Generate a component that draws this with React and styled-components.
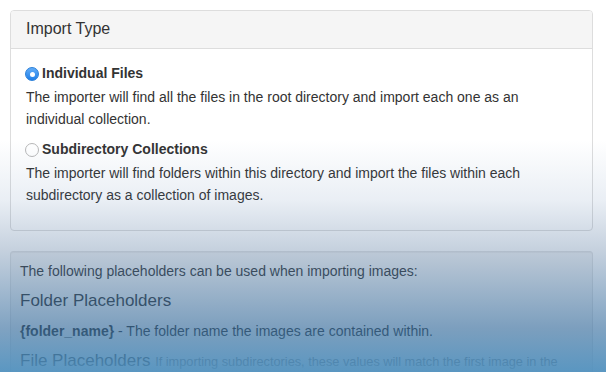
import React from 'react'
import styled, { createGlobalStyle } from 'styled-components'

const GlobalStyle = createGlobalStyle`
  html, body {
    margin: 0;
    padding: 0;
    background: #fff;
    overflow: hidden;
  }
  body {
    font-family: "Liberation Sans", Arial, sans-serif;
    font-size: 14px;
    line-height: 1.42857;
    color: #333;
  }
`

const options = [
  {
    title: 'Individual Files',
    checked: true,
    text: 'The importer will find all the files in the root directory and import each one as an individual collection.'
  },
  {
    title: 'Subdirectory Collections',
    checked: false,
    text: 'The importer will find folders within this directory and import the files within each subdirectory as a collection of images.'
  }
]

const App = () => {
  return (
    <Page>
      <GlobalStyle />
      <Panel>
        <PanelHeading>Import Type</PanelHeading>
        <PanelBody>
          {options.map(opt => (
            <Option key={opt.title}>
              <RadioLabel>
                <Radio checked={opt.checked} />
                {opt.title}
              </RadioLabel>
              <Help>{opt.text}</Help>
            </Option>
          ))}
        </PanelBody>
      </Panel>
      <Well>
        <Intro>The following placeholders can be used when importing images:</Intro>
        <SubHeading>Folder Placeholders</SubHeading>
        <Placeholder>
          <b>{'{folder_name}'}</b> - The folder name the images are contained within.
        </Placeholder>
        <SubHeading>
          File Placeholders <Small>If importing subdirectories, these values will match the first image in the folder.</Small>
        </SubHeading>
      </Well>
      <Fade />
    </Page>
  )
}

const Page = styled.div`
  position: relative;
  height: 372px;
  padding: 10px 13px 0 10px;
  box-sizing: border-box;
  overflow: hidden;
`
const Panel = styled.div`
  border: 1px solid #ddd;
  border-radius: 4px;
  background: #fff;
  margin-bottom: 20px;
`
const PanelHeading = styled.div`
  background: #f5f5f5;
  border-bottom: 1px solid #ddd;
  border-radius: 3px 3px 0 0;
  padding: 8px 15px 9px;
  font-size: 16px;
  line-height: 20px;
  color: #333;
`
const PanelBody = styled.div`
  padding: 15px 15px 24px;
  display: flex;
  flex-direction: column;
  gap: 10px;
`
const Option = styled.div``
const RadioLabel = styled.label`
  display: flex;
  align-items: center;
  gap: 3px;
  height: 20px;
  margin-left: -1px;
  font-weight: bold;
  font-size: 14px;
`
const Radio = styled.span`
  width: 14px;
  height: 14px;
  border-radius: 50%;
  box-sizing: border-box;
  display: inline-flex;
  align-items: center;
  justify-content: center;
  background: ${({ checked }) => (checked ? 'linear-gradient(#62adf8, #1f7ee8)' : '#fff')};
  border: 1px solid ${({ checked }) => (checked ? '#2a7fd9' : '#b8b8b8')};
  &::after {
    content: '';
    width: 5px;
    height: 5px;
    border-radius: 50%;
    background: #fff;
    display: ${({ checked }) => (checked ? 'block' : 'none')};
  }
`
const Help = styled.p`
  margin: 2px 0 0;
  font-size: 14px;
  line-height: 22px;
`
const Well = styled.div`
  border: 1px solid #e3e3e3;
  border-radius: 3px;
  background: #f5f5f5;
  padding: 9px;
  box-shadow: inset 0 1px 1px rgba(0, 0, 0, 0.05);
`
const Intro = styled.p`
  margin: 0;
  line-height: 20px;
`
const SubHeading = styled.h4`
  margin: 10px 0;
  font-size: 17px;
  font-weight: 500;
  line-height: 1.15;
`
const Small = styled.small`
  font-size: 75%;
  color: #777;
  font-weight: normal;
`
const Placeholder = styled.p`
  margin: 0;
  font-size: 14px;
  line-height: 20px;
`
const Fade = styled.div`
  position: absolute;
  inset: 0;
  pointer-events: none;
  background: linear-gradient(
    to bottom,
    rgba(255, 255, 255, 0) 140px,
    rgba(80, 120, 170, 0.12) 200px,
    rgba(80, 115, 155, 0.33) 250px,
    rgba(50, 106, 156, 0.62) 328px,
    rgba(78, 143, 189, 0.93) 372px
  );
`

export default App
